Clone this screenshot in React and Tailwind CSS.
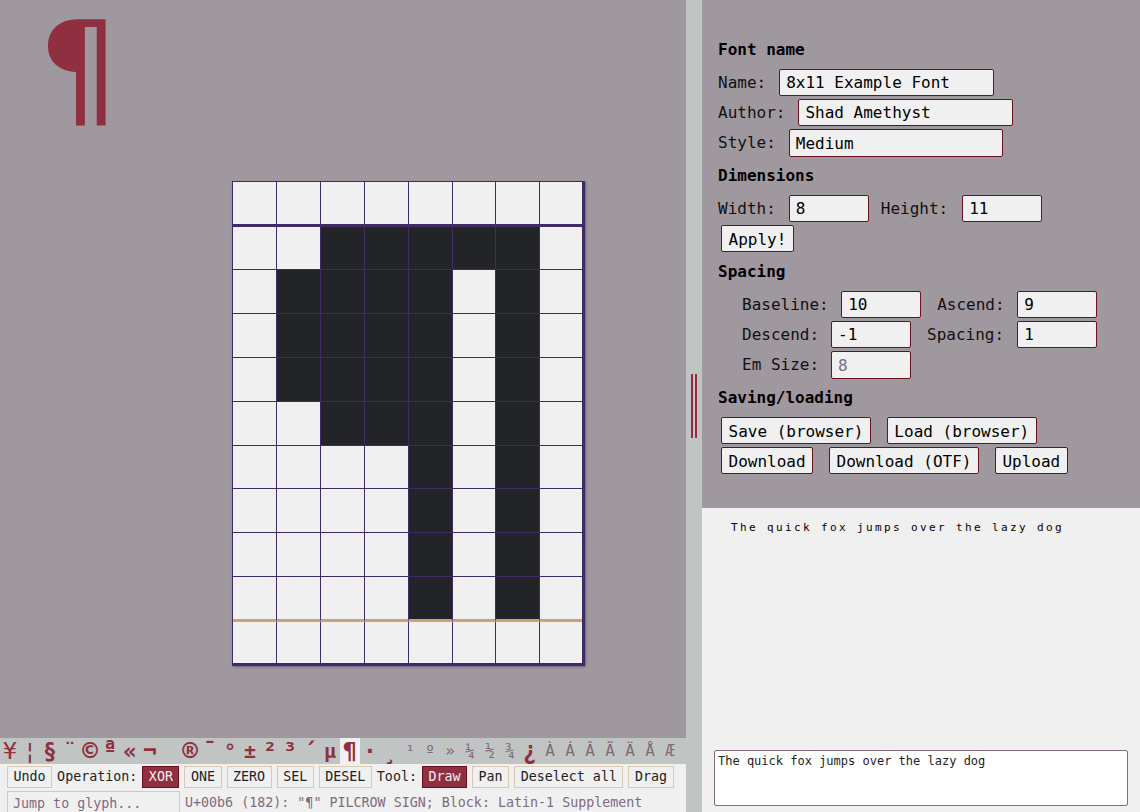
const mono = "font-['DejaVu_Sans_Mono',monospace]";

// pixels that are on, row by row
const rows = [
  '........',
  '..#####.',
  '.####.#.',
  '.####.#.',
  '.####.#.',
  '..###.#.',
  '....#.#.',
  '....#.#.',
  '....#.#.',
  '....#.#.',
  '........',
];

const glyphs = [
  ['¥', 'text-[23px]', 1], ['¦', 'text-[23px]', 1], ['§', 'text-[23px] font-bold', 1], ['¨', 'text-[23px]', 1],
  ['©', 'text-[26px] font-bold', 1], ['ª', 'text-[23px] -translate-y-[2px] font-bold', 1], ['«', 'text-[23px] font-bold', 1], ['¬', 'text-[23px] font-bold', 1],
  ['', '', 0], ['®', 'text-[26px] font-bold', 1], ['¯', 'text-[23px] font-bold', 1], ['°', 'text-[20px] font-bold', 1],
  ['±', 'text-[20px] font-bold', 1], ['²', 'text-[23px] font-bold', 1], ['³', 'text-[23px] font-bold', 1], ['´', 'text-[23px] font-bold', 1],
  ['µ', 'text-[20px] font-bold', 1], ['¶', 'text-[23px] font-bold', 2], ['·', 'text-[23px] font-bold', 1], ['¸', 'text-[23px] font-bold', 1],
  ['¹', 'text-[16px]', 0], ['º', 'text-[16px]', 0], ['»', 'text-[16px]', 0], ['¼', 'text-[16px]', 0],
  ['½', 'text-[16px]', 0], ['¾', 'text-[16px]', 0], ['¿', 'text-[24px] font-bold', 1], ['À', 'text-[16px]', 0],
  ['Á', 'text-[16px]', 0], ['Â', 'text-[16px]', 0], ['Ã', 'text-[16px]', 0], ['Ä', 'text-[16px]', 0],
  ['Å', 'text-[16px]', 0], ['Æ', 'text-[16px]', 0],
];

function Field({ value, placeholder, w, h = 'h-[27px]' }) {
  return (
    <input
      defaultValue={value}
      placeholder={placeholder}
      className={`${w} ${h} px-[6px] bg-[#f0f0f0] border border-[#6b0f1f] rounded-[2px] text-[16px] text-black placeholder:text-[#806a7e] outline-none`}
    />
  );
}

function Btn({ children }) {
  return (
    <button className="h-[27px] px-[6.5px] bg-[#f0f0f0] border border-[#6b0f1f] rounded-[2px] text-[16px] text-black">
      {children}
    </button>
  );
}

function ToolBtn({ children, active }) {
  return (
    <button
      className={`h-[22px] px-[5.5px] border text-[13.33px] ${
        active ? 'bg-[#8f2f3f] border-[#6b0f1f] text-[#f0f0f0]' : 'bg-[#f0f0f0] border-[#d9c9b0] text-[#222]'
      }`}
    >
      {children}
    </button>
  );
}

function Row({ children, className = '' }) {
  return <div className={`flex items-start h-[30px] leading-[27px] ${className}`}>{children}</div>;
}

export default function App() {
  return (
    <div className={`${mono} w-[1140px] h-[812px] flex overflow-hidden bg-[#a0989f]`}>
      {/* editor side */}
      <div className="w-[686px] h-full flex flex-col">
        <div className="flex-1 min-h-0">
          <div className="h-[181px] pl-[38px] pt-[1px]">
            <div className="font-['DejaVu_Sans',sans-serif] text-[128px] leading-[136px] text-[#8f2f3f]">¶</div>
          </div>
          <div className="ml-[232px] w-[353px] grid grid-cols-[44px_44px_44px_44px_44px_43px_44px_42px] grid-rows-[45px_43px_44px_44px_44px_44px_43px_44px_44px_45px_41px] border-l border-t border-r-[3px] border-b-[3px] border-[#3f2c66] shadow-[1px_1px_2px_#3f2c6680]">
            {rows.map((row, y) =>
              row.split('').map((c, x) => (
                <div
                  key={`${x}-${y}`}
                  className={`border-[#3f2c66] ${x === 7 ? '' : 'border-r'} ${
                    c === '#' ? 'bg-[#232428]' : 'bg-[#f0f0f0]'
                  } ${
                    y === 0
                      ? 'border-b-[3px] border-b-[#3f2c66]'
                      : y === 9
                      ? 'border-b-[3px] border-b-[#c9a473]'
                      : y === 10
                      ? ''
                      : 'border-b border-b-[#3f2c66]'
                  }`}
                />
              ))
            )}
          </div>
        </div>

        {/* glyph strip */}
        <div className="h-[26px] flex bg-[#c0c5c3] shrink-0">
          {glyphs.map(([g, size, kind], i) => (
            <div
              key={i}
              className={`w-[20px] h-[26px] shrink-0 flex items-center justify-center ${
                kind === 2 ? 'bg-[#f0f0f0] text-[#8f2f3f]' : kind === 1 ? 'text-[#8f2f3f]' : 'text-[#806a7e]'
              }`}
            >
              <span className={`inline-block leading-[26px] ${size}`}>{g}</span>
            </div>
          ))}
        </div>

        {/* tools */}
        <div className="h-[48px] shrink-0 bg-[#f0f0f0] pl-[7px] pt-[2px] overflow-hidden text-[13.33px] text-[#222]">
          <div className="flex items-center gap-[5px] h-[22px]">
            <ToolBtn>Undo</ToolBtn>
            <span className="-mt-[1px]">Operation:</span>
            <ToolBtn active>XOR</ToolBtn>
            <ToolBtn>ONE</ToolBtn>
            <ToolBtn>ZERO</ToolBtn>
            <ToolBtn>SEL</ToolBtn>
            <ToolBtn>DESEL</ToolBtn>
            <span className="-mt-[1px]">Tool:</span>
            <ToolBtn active>Draw</ToolBtn>
            <ToolBtn>Pan</ToolBtn>
            <ToolBtn>Deselect all</ToolBtn>
            <ToolBtn>Drag</ToolBtn>
          </div>
          <div className="flex items-center gap-[5px] mt-[3px]">
            <input
              placeholder="Jump to glyph..."
              className="w-[173px] h-[24px] px-[5px] bg-[#f0f0f0] border border-[#d9c9b0] text-[13.33px] placeholder:text-[#806a7e] outline-none"
            />
            <span className="text-[#806a7e] whitespace-nowrap">U+00b6 (182): "¶" PILCROW SIGN; Block: Latin-1 Supplement</span>
          </div>
        </div>
      </div>

      {/* divider */}
      <div className="w-[16px] h-full shrink-0 bg-[#c0c5c3] flex items-center justify-center gap-[2px]">
        <div className="w-[2px] h-[64px] bg-[#8f2f3f]" />
        <div className="w-[2px] h-[64px] bg-[#8f2f3f]" />
      </div>

      {/* settings side */}
      <div className="flex-1 h-full flex flex-col">
        <div className="h-[508px] shrink-0 pl-[16px] pt-[38px] text-[16px] text-[#111] whitespace-nowrap">
          <h3 className="font-bold h-[24px] leading-[24px] mb-[7px] text-black">Font name</h3>
          <Row className="gap-[13px]"><span>Name:</span><Field value="8x11 Example Font" w="w-[215px]" /></Row>
          <Row className="gap-[13px]"><span>Author:</span><Field value="Shad Amethyst" w="w-[215px]" /></Row>
          <Row className="gap-[13px]"><span>Style:</span><Field value="Medium" w="w-[214px]" h="h-[28px]" /></Row>

          <h3 className="font-bold h-[24px] leading-[24px] mt-[5px] mb-[7px] text-black">Dimensions</h3>
          <Row>
            <span>Width:</span><span className="ml-[13px]"><Field value="8" w="w-[80px]" /></span>
            <span className="ml-[12px]">Height:</span><span className="ml-[14px]"><Field value="11" w="w-[80px]" /></span>
          </Row>
          <Row className="pl-[3px]"><Btn>Apply!</Btn></Row>

          <h3 className="font-bold h-[24px] leading-[24px] mt-[5px] mb-[7px] text-black">Spacing</h3>
          <Row className="pl-[24px]">
            <span>Baseline:</span><span className="ml-[12.5px]"><Field value="10" w="w-[80px]" /></span>
            <span className="ml-[16px]">Ascend:</span><span className="ml-[12.5px]"><Field value="9" w="w-[80px]" /></span>
          </Row>
          <Row className="pl-[24px]">
            <span>Descend:</span><span className="ml-[12px]"><Field value="-1" w="w-[80px]" /></span>
            <span className="ml-[16px]">Spacing:</span><span className="ml-[13px]"><Field value="1" w="w-[80px]" /></span>
          </Row>
          <Row className="pl-[24px]">
            <span>Em Size:</span><span className="ml-[12px]"><Field placeholder="8" w="w-[80px]" h="h-[28px]" /></span>
          </Row>

          <h3 className="font-bold h-[24px] leading-[24px] mt-[5px] mb-[7px] text-black">Saving/loading</h3>
          <Row className="pl-[3px] gap-[16px]"><Btn>Save (browser)</Btn><Btn>Load (browser)</Btn></Row>
          <Row className="pl-[3px] gap-[16px]"><Btn>Download</Btn><Btn>Download (OTF)</Btn><Btn>Upload</Btn></Row>
        </div>
        <div className="flex-1 min-h-0 bg-[#f0f0f0] flex flex-col justify-between pl-[12px] pr-[12px] pb-[6px]">
          <div className="pl-[17px] pt-[13px] text-[11px] leading-[14px] tracking-[2.38px] text-black whitespace-nowrap">
            The quick fox jumps over the lazy dog
          </div>
          <textarea
            defaultValue="The quick fox jumps over the lazy dog"
            className="h-[56px] w-full block bg-white border border-[#806a7e] rounded-[2px] px-[3px] py-[1px] text-[12px] text-[#222] outline-none resize-none"
          />
        </div>
      </div>
    </div>
  );
}
